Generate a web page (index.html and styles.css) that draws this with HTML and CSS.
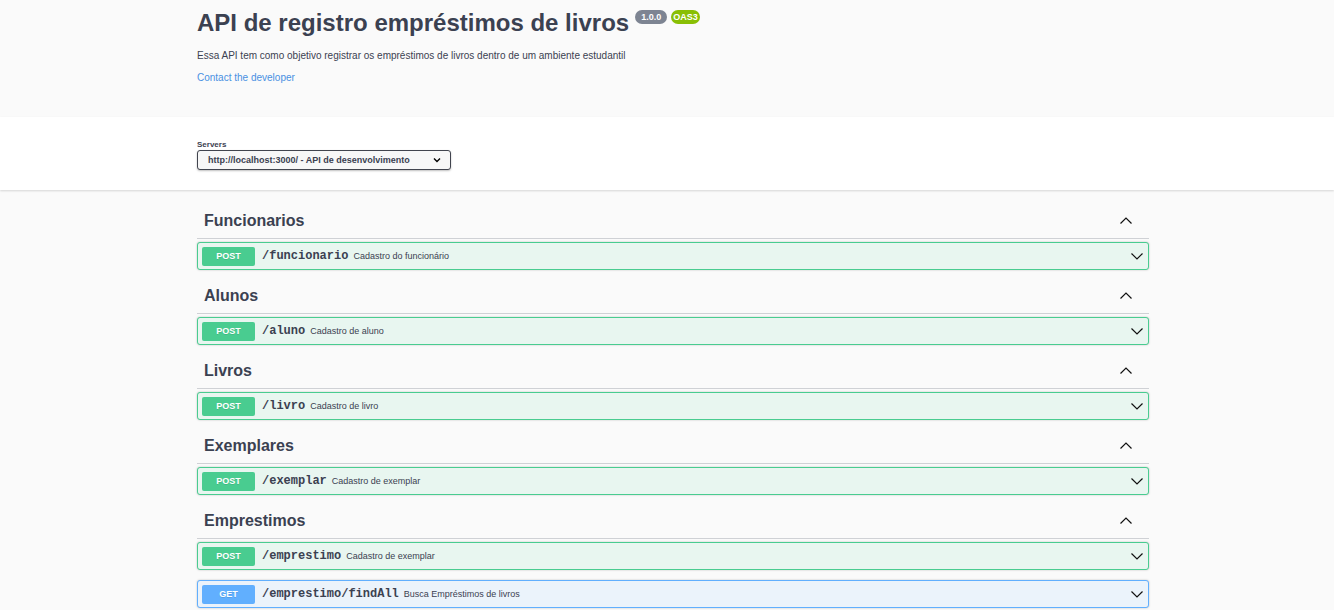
FILE: index.html
```
<!DOCTYPE html>
<html lang="pt-BR">
<head>
<meta charset="utf-8">
<meta name="viewport" content="width=device-width, initial-scale=1">
<title>API de registro empréstimos de livros</title>
<link rel="stylesheet" href="styles.css">
</head>
<body>
<svg class="sprite" aria-hidden="true">
  <symbol id="up" viewBox="0 0 14 14"><path d="M1.500 9.500 7 4l5.500 5.500"/></symbol>
  <symbol id="down" viewBox="0 0 14 14"><path d="M1.500 4.500 7 10l5.500-5.500"/></symbol>
</svg>
<header class="info">
  <div class="wrapper">
    <div class="title-row">
      <h1 class="title">API de registro empréstimos de livros</h1>
      <div class="badges">
        <span class="badge">1.0.0</span>
        <span class="badge badge-oas">OAS3</span>
      </div>
    </div>
    <p class="description">Essa API tem como objetivo registrar os empréstimos de livros dentro de um ambiente estudantil</p>
    <a class="contact" href="#contact">Contact the developer</a>
  </div>
</header>
<section class="schemes">
  <div class="wrapper">
    <label class="servers-label" for="servers">Servers</label>
    <div class="select-box">
      <select class="servers" id="servers"><option>http://localhost:3000/ - API de desenvolvimento</option></select>
      <svg class="select-arrow" viewBox="0 0 8 6" aria-hidden="true"><path d="M1 1.500 4 4.500l3-3"/></svg>
    </div>
  </div>
</section>
<main class="wrapper tags">
  <section class="tag">
    <div class="tag-head"><h2 class="tag-name">Funcionarios</h2><button class="toggle" aria-label="Recolher Funcionarios"><svg class="icon"><use href="#up"/></svg></button></div>
    <button class="op post"><span class="method">POST</span><span class="path">/funcionario</span><span class="summary">Cadastro do funcionário</span><svg class="icon"><use href="#down"/></svg></button>
  </section>
  <section class="tag">
    <div class="tag-head"><h2 class="tag-name">Alunos</h2><button class="toggle" aria-label="Recolher Alunos"><svg class="icon"><use href="#up"/></svg></button></div>
    <button class="op post"><span class="method">POST</span><span class="path">/aluno</span><span class="summary">Cadastro de aluno</span><svg class="icon"><use href="#down"/></svg></button>
  </section>
  <section class="tag">
    <div class="tag-head"><h2 class="tag-name">Livros</h2><button class="toggle" aria-label="Recolher Livros"><svg class="icon"><use href="#up"/></svg></button></div>
    <button class="op post"><span class="method">POST</span><span class="path">/livro</span><span class="summary">Cadastro de livro</span><svg class="icon"><use href="#down"/></svg></button>
  </section>
  <section class="tag">
    <div class="tag-head"><h2 class="tag-name">Exemplares</h2><button class="toggle" aria-label="Recolher Exemplares"><svg class="icon"><use href="#up"/></svg></button></div>
    <button class="op post"><span class="method">POST</span><span class="path">/exemplar</span><span class="summary">Cadastro de exemplar</span><svg class="icon"><use href="#down"/></svg></button>
  </section>
  <section class="tag">
    <div class="tag-head"><h2 class="tag-name">Emprestimos</h2><button class="toggle" aria-label="Recolher Emprestimos"><svg class="icon"><use href="#up"/></svg></button></div>
    <button class="op post"><span class="method">POST</span><span class="path">/emprestimo</span><span class="summary">Cadastro de exemplar</span><svg class="icon"><use href="#down"/></svg></button>
    <button class="op get"><span class="method">GET</span><span class="path">/emprestimo/findAll</span><span class="summary">Busca Empréstimos de livros</span><svg class="icon"><use href="#down"/></svg></button>
  </section>
</main>
</body>
</html>
```
FILE: styles.css
```
* { box-sizing: border-box; }

body {
  margin: 0;
  padding-left: 12px;
  background: #fafafa;
  color: #3b4151;
  font: 9px/12px "Liberation Sans", Arial, sans-serif;
}

button, select { font: inherit; color: inherit; }

.sprite { display: none; }

.wrapper { max-width: 952px; margin: 0 auto; }

.info { padding: 8px 0 33px; font-size: 10px; }
.title-row { display: flex; align-items: flex-start; gap: 6px; }
.title { margin: 0; font-size: 24px; line-height: 30px; }
.badges { display: flex; gap: 4px; padding-top: 2px; }
.badge {
  padding: 0 6px;
  border-radius: 7px;
  background: #7d8492;
  color: #fff;
  font-size: 9px;
  font-weight: bold;
  line-height: 14px;
}
.badge-oas { padding: 0 2px; background: #89bf04; }
.description { margin: 12px 0 10px; }
.contact { display: block; width: fit-content; color: #4990e2; text-decoration: none; }

.schemes {
  margin-left: -12px;
  padding: 23px 0 20px 12px;
  background: #fff;
  box-shadow: 0 1px 2px rgba(0, 0, 0, .15);
}
.servers-label { display: block; font-size: 8px; font-weight: bold; line-height: 10px; }
.select-box { position: relative; width: fit-content; }
.servers {
  display: block;
  width: 254px;
  height: 20px;
  padding: 0 20px 0 10px;
  border: 1px solid #41444e;
  border-radius: 3px;
  appearance: none;
  background: #f7f7f7;
  box-shadow: 0 1px 2px rgba(0, 0, 0, .25);
  font-weight: bold;
}
.select-arrow {
  position: absolute;
  top: 7px;
  right: 10px;
  width: 8px;
  height: 6px;
  fill: none;
  stroke: #000;
  stroke-width: 1.4;
}

.icon { flex: none; width: 14px; height: 14px; fill: none; stroke: #111; stroke-width: 1.2; }

.tags { padding-top: 15px; }
.tag { padding-bottom: 10px; }
.tag-head {
  display: flex;
  align-items: center;
  height: 34px;
  margin-bottom: 3px;
  padding: 0 16px 2px 7px;
  border-bottom: 1px solid #cfd1d5;
}
.tag-name { flex: 1; margin: 0; font-size: 16px; line-height: 20px; }
.toggle { display: flex; padding: 0; border: 0; background: none; }

.op {
  display: flex;
  align-items: center;
  width: 100%;
  height: 28px;
  padding: 0 4px;
  border: 1px solid;
  border-radius: 3px;
  box-shadow: 0 0 2px rgba(0, 0, 0, .25);
  text-align: left;
}
.op + .op { margin-top: 10px; }
.post { border-color: #49cc90; background: #e8f6f0; }
.get { border-color: #61affe; background: #ebf3fb; }
.method {
  width: 53px;
  border-radius: 2px;
  color: #fff;
  font-weight: bold;
  line-height: 19px;
  text-align: center;
  text-shadow: 0 1px 0 rgba(0, 0, 0, .1);
}
.post .method { background: #49cc90; }
.get .method { background: #61affe; }
.path { padding: 0 5px 0 7px; font: bold 12px/14px "Liberation Mono", monospace; }
.summary { flex: 1; }
```
